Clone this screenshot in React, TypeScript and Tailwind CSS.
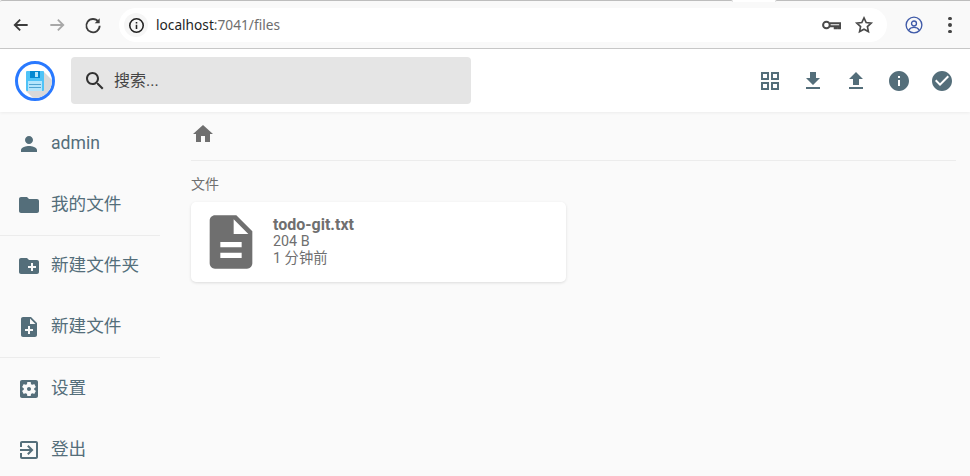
import type { ReactNode } from 'react'

const paths = {
  person: 'M12 12c2.21 0 4-1.79 4-4s-1.79-4-4-4-4 1.79-4 4 1.79 4 4 4zm0 2c-2.67 0-8 1.34-8 4v2h16v-2c0-2.66-5.33-4-8-4z',
  folder: 'M10 4H4c-1.1 0-1.99.9-1.99 2L2 18c0 1.1.9 2 2 2h16c1.1 0 2-.9 2-2V8c0-1.1-.9-2-2-2h-8l-2-2z',
  newFolder: 'M20 6h-8l-2-2H4c-1.11 0-1.99.89-1.99 2L2 18c0 1.11.89 2 2 2h16c1.11 0 2-.89 2-2V8c0-1.11-.89-2-2-2zm-1 8h-3v3h-2v-3h-3v-2h3V9h2v3h3v2z',
  newFile: 'M14 2H6c-1.1 0-1.99.9-1.99 2L4 20c0 1.1.89 2 1.99 2H18c1.1 0 2-.9 2-2V8l-6-6zm2 14h-3v3h-2v-3H8v-2h3v-3h2v3h3v2zm-3-7V3.5L18.5 9H13z',
  settings: 'M12 10c-1.1 0-2 .9-2 2s.9 2 2 2 2-.9 2-2-.9-2-2-2zm7-7H5c-1.11 0-2 .9-2 2v14c0 1.1.89 2 2 2h14c1.11 0 2-.9 2-2V5c0-1.1-.89-2-2-2zm-1.75 9c0 .23-.02.46-.05.68l1.48 1.16c.13.11.17.3.08.45l-1.4 2.42c-.09.15-.27.21-.43.15l-1.74-.7c-.36.28-.76.51-1.18.69l-.26 1.85c-.03.17-.18.3-.35.3h-2.8c-.17 0-.32-.13-.35-.29l-.26-1.85c-.43-.18-.82-.41-1.18-.69l-1.74.7c-.16.06-.34 0-.43-.15l-1.4-2.42c-.09-.15-.05-.34.08-.45l1.48-1.16c-.03-.23-.05-.46-.05-.69 0-.23.02-.46.05-.68l-1.48-1.16c-.13-.11-.17-.3-.08-.45l1.4-2.42c.09-.15.27-.21.43-.15l1.74.7c.36-.28.76-.51 1.18-.69l.26-1.85c.03-.17.18-.3.35-.3h2.8c.17 0 .32.13.35.29l.26 1.85c.43.18.82.41 1.18.69l1.74-.7c.16-.06.34 0 .43.15l1.4 2.42c.09.15.05.34-.08.45l-1.48 1.16c.03.23.05.46.05.69z',
  logout: 'M10.09 15.59L11.5 17l5-5-5-5-1.41 1.41L12.67 11H3v2h9.67l-2.58 2.59zM19 3H5c-1.11 0-2 .9-2 2v4h2V5h14v14H5v-4H3v4c0 1.1.89 2 2 2h14c1.1 0 2-.9 2-2V5c0-1.1-.9-2-2-2z',
  home: 'M10 20v-6h4v6h5v-8h3L12 3 2 12h3v8z',
  file: 'M14 2H6c-1.1 0-1.99.9-1.99 2L4 20c0 1.1.89 2 1.99 2H18c1.1 0 2-.9 2-2V8l-6-6zm2 16H8v-2h8v2zm0-4H8v-2h8v2zm-3-5V3.5L18.5 9H13z',
  grid: 'M3 3v8h8V3H3zm6 6H5V5h4v4zm-6 4v8h8v-8H3zm6 6H5v-4h4v4zm4-16v8h8V3h-8zm6 6h-4V5h4v4zm-6 4v8h8v-8h-8zm6 6h-4v-4h4v4z',
  download: 'M19 9h-4V3H9v6H5l7 7 7-7zM5 18v2h14v-2H5z',
  upload: 'M9 16h6v-6h4l-7-7-7 7h4v6zm-4 2h14v2H5v-2z',
  info: 'M12 2C6.48 2 2 6.48 2 12s4.48 10 10 10 10-4.48 10-10S17.52 2 12 2zm1 15h-2v-6h2v6zm0-8h-2V7h2v2z',
  check: 'M12 2C6.48 2 2 6.48 2 12s4.48 10 10 10 10-4.48 10-10S17.52 2 12 2zm-2 15l-5-5 1.41-1.41L10 14.17l7.59-7.59L19 8l-9 9z',
  search: 'M15.5 14h-.79l-.28-.27C15.41 12.59 16 11.11 16 9.5 16 5.91 13.09 3 9.5 3S3 5.91 3 9.5 5.91 16 9.5 16c1.61 0 3.09-.59 4.23-1.57l.27.28v.79l5 4.99L20.49 19l-4.99-5zm-6 0C7.01 14 5 11.99 5 9.5S7.01 5 9.5 5 14 7.01 14 9.5 11.99 14 9.5 14z',
}

function Icon({ d, className }: { d: string; className: string }) {
  return (
    <svg viewBox="0 0 24 24" fill="currentColor" className={className}>
      <path d={d} />
    </svg>
  )
}

function Logo() {
  return (
    <div className="flex h-10 w-10 items-center justify-center overflow-hidden rounded-full border-[3.5px] border-[#2979ff] bg-white">
      <svg viewBox="0 0 40 40" className="h-10 w-10 shrink-0">
        <path d="M11 30 L28 10 L40 22 L40 40 L21 40 Z" fill="#d9d9d9" />
        <rect x="11" y="10" width="18" height="20" rx="1" fill="#4fc3f7" />
        <rect x="15" y="10" width="10" height="7" fill="#0288d1" />
        <rect x="20" y="11" width="3" height="5" fill="#b3e5fc" />
        <rect x="13" y="20" width="14" height="10" fill="#b3e5fc" />
        <rect x="14" y="23" width="12" height="1" fill="#4fa3d1" />
        <rect x="14" y="26" width="12" height="1" fill="#4fa3d1" />
      </svg>
    </div>
  )
}

function BrowserBar() {
  return (
    <div className="flex h-[49px] shrink-0 flex-col border-b border-[#c9c9c9] bg-[#f9f9f9] font-['Noto_Sans',sans-serif]">
      <div className="flex h-[2px] shrink-0 bg-white">
        <div className="w-[733px] rounded-t-[6px] border-t-[1.5px] border-[#bdbdbd] bg-[#f9f9f9]" />
        <div className="ml-[42px] flex-1 rounded-tl-[6px] border-t-[1.5px] border-[#bdbdbd] bg-[#f9f9f9]" />
      </div>
      <div className="flex flex-1 items-center">
        <div className="ml-[11px] flex items-center gap-[16px] text-[#3c3c3c]">
          <svg viewBox="0 0 24 24" className="h-[20px] w-[20px]" fill="none" stroke="currentColor" strokeWidth="2.2">
            <path d="M20 12H5M11 5.500 4.500 12l6.500 6.500" />
          </svg>
          <svg viewBox="0 0 24 24" className="h-[20px] w-[20px] text-[#a8a8a8]" fill="none" stroke="currentColor" strokeWidth="2.2">
            <path d="M4 12h15M13 5.500l6.500 6.500-6.500 6.500" />
          </svg>
          <svg viewBox="0 0 24 24" className="h-[20px] w-[20px]" fill="none" stroke="currentColor" strokeWidth="2.2">
            <path d="M18.400 8A8 8 0 1 0 20 13" />
            <path d="M20 4v6h-6" fill="currentColor" stroke="none" />
          </svg>
        </div>
        <div className="ml-[16px] flex h-[34px] w-[768px] items-center rounded-full bg-white pl-[5px] pr-[13px]">
          <div className="flex h-[24px] w-[24px] items-center justify-center rounded-full bg-[#f6f6f6]">
            <svg viewBox="0 0 24 24" className="h-[17px] w-[17px] text-[#222]" fill="none" stroke="currentColor" strokeWidth="2.2">
              <circle cx="12" cy="12" r="9.500" />
              <path d="M12 11v6M12 7v2" />
            </svg>
          </div>
          <div className="ml-[8px] text-[13.7px] text-[#6e6e6e]">
            <span className="text-[#1f1f1f]">localhost</span>:7041/files
          </div>
          <div className="ml-auto flex items-center gap-[13px] text-[#4a4a4a]">
            <svg viewBox="0 0 24 24" className="h-[20px] w-[20px]" fill="none" stroke="currentColor" strokeWidth="2.400">
              <circle cx="6.500" cy="12" r="4" />
              <path d="M10.500 10h12.500v6h-2v-2.500h-2.500v2.500h-2v-2.500h-6" />
            </svg>
            <svg viewBox="0 0 24 24" className="h-[20px] w-[20px]" fill="none" stroke="currentColor" strokeWidth="2">
              <path d="m12 3.500 2.600 5.600 6 .7-4.500 4.100 1.200 6L12 17l-5.300 2.900 1.200-6L3.400 9.800l6-.7z" />
            </svg>
          </div>
        </div>
        <div className="ml-[18px] text-[#3f5aa8]">
          <svg viewBox="0 0 24 24" className="h-[18px] w-[18px]" fill="none" stroke="currentColor" strokeWidth="1.800">
            <circle cx="12" cy="12" r="10.500" />
            <circle cx="12" cy="10" r="3.300" />
            <path d="M5 19c1.500-2.800 4.300-3.800 7-3.800s5.500 1 7 3.800" />
          </svg>
        </div>
        <div className="ml-[25px] flex flex-col gap-[3px]">
          <span className="h-[3.500px] w-[3.500px] rounded-full bg-[#444]" />
          <span className="h-[3.500px] w-[3.500px] rounded-full bg-[#444]" />
          <span className="h-[3.500px] w-[3.500px] rounded-full bg-[#444]" />
        </div>
      </div>
    </div>
  )
}

function Header() {
  const actions = [paths.grid, paths.download, paths.upload, paths.info, paths.check]
  return (
    <header className="z-10 flex h-[63px] shrink-0 items-center bg-white pl-[15px] pr-[16px] shadow-[0_1px_3px_rgba(0,0,0,0.06)]">
      <Logo />
      <div className="ml-[16px] flex h-[47px] w-[400px] items-center rounded-[4px] bg-[#e5e5e5] pl-[12px]">
        <Icon d={paths.search} className="h-6 w-6 text-[#333]" />
        <span className="ml-[7px] text-[16px] text-[#444]">搜索...</span>
      </div>
      <div className="ml-auto flex items-center gap-[19px] text-[#546e7a]">
        {actions.map((d) => (
          <Icon key={d} d={d} className="h-6 w-6" />
        ))}
      </div>
    </header>
  )
}

function NavItem({ icon, short, children }: { icon: string; short?: boolean; children: ReactNode }) {
  return (
    <div className={`flex items-center pl-[17px] text-[#546e7a] ${short ? 'h-[60.5px]' : 'h-[61px]'}`}>
      <Icon d={icon} className="h-6 w-6" />
      <span className={`ml-[10px] text-[17.6px] ${short ? 'mb-[2px]' : ''}`}>{children}</span>
    </div>
  )
}

function Sidebar() {
  return (
    <nav className="w-[160px] shrink-0 pt-[1px]">
      <NavItem icon={paths.person}>admin</NavItem>
      <NavItem icon={paths.folder}>我的文件</NavItem>
      <div className="border-t border-[#ececec]">
        <NavItem icon={paths.newFolder} short>新建文件夹</NavItem>
        <NavItem icon={paths.newFile} short>新建文件</NavItem>
      </div>
      <div className="border-t border-[#ececec]">
        <NavItem icon={paths.settings}>设置</NavItem>
        <NavItem icon={paths.logout}>登出</NavItem>
      </div>
    </nav>
  )
}

function FileCard() {
  return (
    <div className="flex h-[80px] w-[375px] items-center rounded-[5px] bg-white pl-[8px] shadow-[0_1px_3px_rgba(0,0,0,0.12)]">
      <Icon d={paths.file} className="h-[64px] w-[64px] text-[#6f6f6f]" />
      <div className="mb-[2px] ml-[10px] text-[14.3px] leading-[17px] text-[#6f6f6f]">
        <div className="text-[16px] font-bold leading-[17px]">todo-git.txt</div>
        <div>204 B</div>
        <div>1 分钟前</div>
      </div>
    </div>
  )
}

export default function App() {
  return (
    <div className="flex h-[476px] w-[970px] flex-col overflow-hidden bg-[#fafafa] font-['Roboto','Noto_Sans_CJK_SC',sans-serif]">
      <BrowserBar />
      <Header />
      <div className="flex min-h-0 flex-1">
        <Sidebar />
        <main className="ml-[31px] w-[765px]">
          <div className="flex h-[49px] items-center border-b border-[#ececec] pb-[4px] text-[#6f6f6f]">
            <Icon d={paths.home} className="h-6 w-6" />
          </div>
          <div className="mt-[13px] text-[14px] leading-[20px] text-[#6f6f6f]">文件</div>
          <div className="mt-[8px]">
            <FileCard />
          </div>
        </main>
      </div>
    </div>
  )
}
